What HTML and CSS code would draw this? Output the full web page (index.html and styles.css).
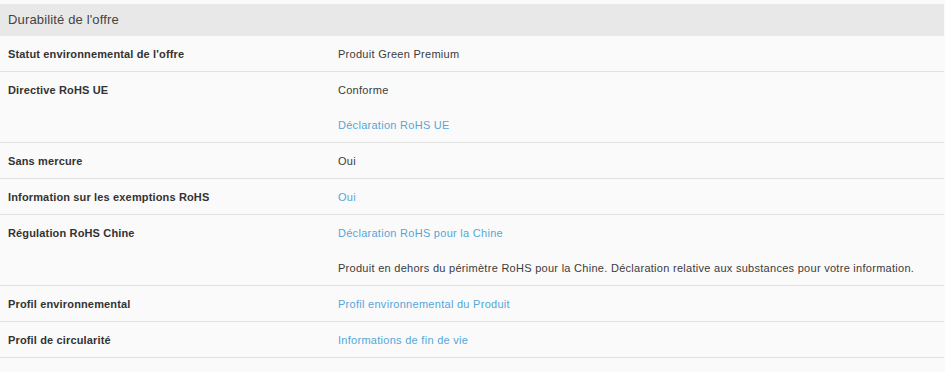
FILE: index.html
```html
<!DOCTYPE html>
<html lang="fr">
<head>
    <meta charset="UTF-8">
    <meta name="viewport" content="width=device-width, initial-scale=1.0">
    <title>Durabilité de l'offre</title>
    <link rel="stylesheet" href="styles.css">
</head>
<body>
    <section class="specs">
        <h2 class="specs-title">Durabilité de l'offre</h2>

        <div class="spec-row">
            <div class="spec-label">Statut environnemental de l'offre</div>
            <div class="spec-values">
                <div class="spec-value">Produit Green Premium</div>
            </div>
        </div>

        <div class="spec-row">
            <div class="spec-label">Directive RoHS UE</div>
            <div class="spec-values">
                <div class="spec-value">Conforme</div>
                <div class="spec-value"><a href="#">Déclaration RoHS UE</a></div>
            </div>
        </div>

        <div class="spec-row">
            <div class="spec-label">Sans mercure</div>
            <div class="spec-values">
                <div class="spec-value">Oui</div>
            </div>
        </div>

        <div class="spec-row">
            <div class="spec-label">Information sur les exemptions RoHS</div>
            <div class="spec-values">
                <div class="spec-value"><a href="#">Oui</a></div>
            </div>
        </div>

        <div class="spec-row">
            <div class="spec-label">Régulation RoHS Chine</div>
            <div class="spec-values">
                <div class="spec-value"><a href="#">Déclaration RoHS pour la Chine</a></div>
                <div class="spec-value">Produit en dehors du périmètre RoHS pour la Chine. Déclaration relative aux substances pour votre information.</div>
            </div>
        </div>

        <div class="spec-row">
            <div class="spec-label">Profil environnemental</div>
            <div class="spec-values">
                <div class="spec-value"><a href="#">Profil environnemental du Produit</a></div>
            </div>
        </div>

        <div class="spec-row">
            <div class="spec-label">Profil de circularité</div>
            <div class="spec-values">
                <div class="spec-value"><a href="#">Informations de fin de vie</a></div>
            </div>
        </div>
    </section>
</body>
</html>
```

FILE: styles.css
```css
body {
    font-family: "Liberation Sans", Arial, sans-serif;
    background-color: #fafafa;
    color: #3a3a3a;
    margin: 0;
    padding: 4px 1px 0 0;
}

.specs-title {
    margin: 0;
    height: 32px;
    line-height: 32px;
    padding: 0 8px;
    background-color: #e8e8e8;
    font-size: 13px;
    font-weight: normal;
    letter-spacing: 0.15px;
    color: #444;
}

.spec-row {
    display: grid;
    grid-template-columns: 338px 1fr;
    border-bottom: 1px solid #e2e2e2;
    font-size: 11px;
}

.spec-label {
    padding: 1px 8px 0;
    height: 34px;
    line-height: 35px;
    font-weight: bold;
    letter-spacing: 0.15px;
    color: #333;
}

.spec-value {
    padding-top: 1px;
    height: 34px;
    line-height: 35px;
    letter-spacing: 0.28px;
    color: #3a3a3a;
}

.spec-value a {
    color: #55a6d8;
    text-decoration: none;
}
```
